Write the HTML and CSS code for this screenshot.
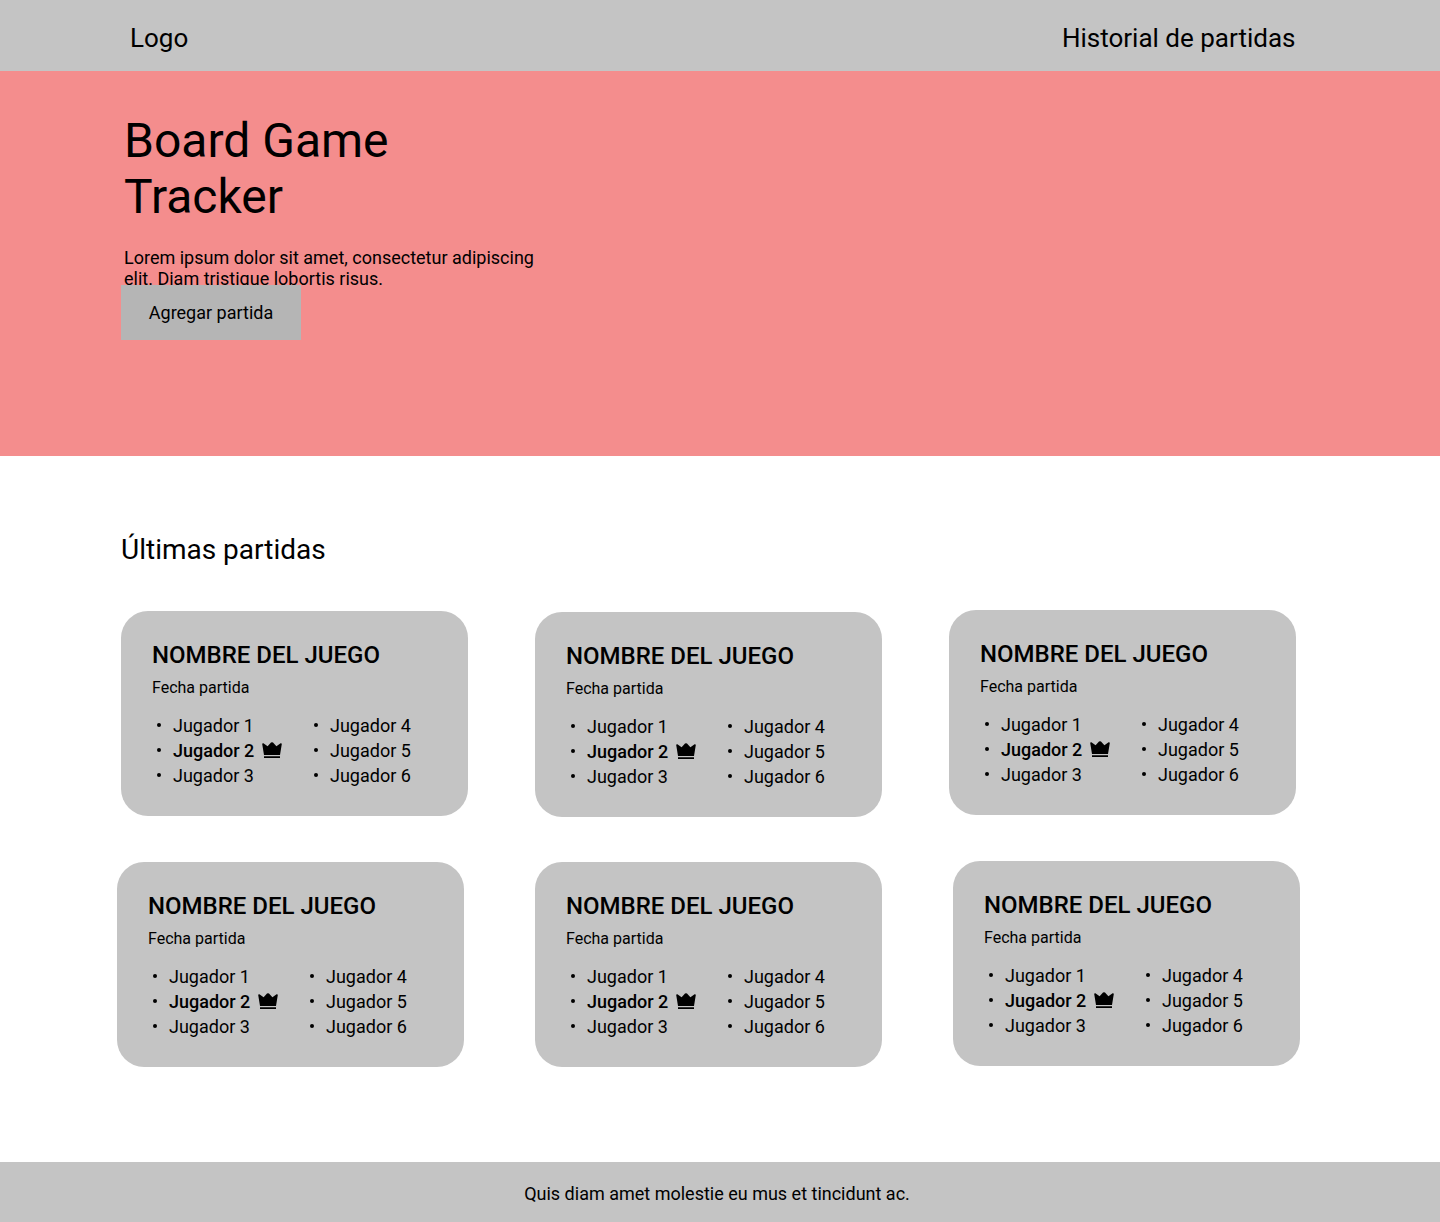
FILE: index.html
```html
<!DOCTYPE html>
<html lang="es">
<head>
<meta charset="utf-8">
<title>Board Game Tracker</title>
<link rel="stylesheet" href="styles.css">
</head>
<body>
<svg class="symbols" aria-hidden="true">
  <symbol id="crown" viewBox="0 0 20 16">
    <path d="M.2 1.9Q.4 1 1.4 1.3L5.6 4.2 9 .6Q10-.2 11 .6L14.4 4.2 18.6 1.3Q19.6 1 19.8 1.9L18 12.9H2ZM2 14.2H18V16H2Z"/>
  </symbol>
</svg>
<header class="header">
  <span>Logo</span>
  <span>Historial de partidas</span>
</header>
<section class="hero">
  <h1 class="hero-title">Board Game<br>Tracker</h1>
  <p class="hero-text">Lorem ipsum dolor sit amet, consectetur adipiscing<br>elit. Diam tristique lobortis risus.</p>
  <button class="hero-button" type="button">Agregar partida</button>
</section>
<main class="games">
  <h2 class="games-title">Últimas partidas</h2>
  <div class="row row-first">
    <article class="card drop-1">
      <h3 class="card-title">NOMBRE DEL JUEGO</h3>
      <p class="card-date">Fecha partida</p>
      <div class="players">
        <ul class="list"><li>Jugador 1</li><li class="winner">Jugador 2<svg class="crown"><use href="#crown"/></svg></li><li>Jugador 3</li></ul>
        <ul class="list"><li>Jugador 4</li><li>Jugador 5</li><li>Jugador 6</li></ul>
      </div>
    </article>
    <article class="card drop-2">
      <h3 class="card-title">NOMBRE DEL JUEGO</h3>
      <p class="card-date">Fecha partida</p>
      <div class="players">
        <ul class="list"><li>Jugador 1</li><li class="winner">Jugador 2<svg class="crown"><use href="#crown"/></svg></li><li>Jugador 3</li></ul>
        <ul class="list"><li>Jugador 4</li><li>Jugador 5</li><li>Jugador 6</li></ul>
      </div>
    </article>
    <article class="card">
      <h3 class="card-title">NOMBRE DEL JUEGO</h3>
      <p class="card-date">Fecha partida</p>
      <div class="players">
        <ul class="list"><li>Jugador 1</li><li class="winner">Jugador 2<svg class="crown"><use href="#crown"/></svg></li><li>Jugador 3</li></ul>
        <ul class="list"><li>Jugador 4</li><li>Jugador 5</li><li>Jugador 6</li></ul>
      </div>
    </article>
  </div>
  <div class="row row-second">
    <article class="card drop-1">
      <h3 class="card-title">NOMBRE DEL JUEGO</h3>
      <p class="card-date">Fecha partida</p>
      <div class="players">
        <ul class="list"><li>Jugador 1</li><li class="winner">Jugador 2<svg class="crown"><use href="#crown"/></svg></li><li>Jugador 3</li></ul>
        <ul class="list"><li>Jugador 4</li><li>Jugador 5</li><li>Jugador 6</li></ul>
      </div>
    </article>
    <article class="card drop-1">
      <h3 class="card-title">NOMBRE DEL JUEGO</h3>
      <p class="card-date">Fecha partida</p>
      <div class="players">
        <ul class="list"><li>Jugador 1</li><li class="winner">Jugador 2<svg class="crown"><use href="#crown"/></svg></li><li>Jugador 3</li></ul>
        <ul class="list"><li>Jugador 4</li><li>Jugador 5</li><li>Jugador 6</li></ul>
      </div>
    </article>
    <article class="card">
      <h3 class="card-title">NOMBRE DEL JUEGO</h3>
      <p class="card-date">Fecha partida</p>
      <div class="players">
        <ul class="list"><li>Jugador 1</li><li class="winner">Jugador 2<svg class="crown"><use href="#crown"/></svg></li><li>Jugador 3</li></ul>
        <ul class="list"><li>Jugador 4</li><li>Jugador 5</li><li>Jugador 6</li></ul>
      </div>
    </article>
  </div>
</main>
<footer class="footer">Quis diam amet molestie eu mus et tincidunt ac.</footer>
</body>
</html>
```
FILE: styles.css
```css
* { box-sizing: border-box; margin: 0; padding: 0; }

body {
  display: flex;
  flex-direction: column;
  height: 1222px;
  background: #fff;
  color: #000;
  font-family: Roboto, "Liberation Sans", sans-serif;
  font-size: 18px;
  line-height: 21px;
}

.symbols {
  position: absolute;
  width: 0;
  height: 0;
}

.header {
  display: flex;
  justify-content: space-between;
  height: 71px;
  padding: 23px 144.5px 0 130px;
  background: #c4c4c4;
  font-size: 26px;
  line-height: 30px;
}

.hero {
  height: 385px;
  padding: 42px 0 0 124px;
  background: #f48d8d;
}

.hero-title {
  font-size: 48px;
  font-weight: 400;
  line-height: 56px;
}

.hero-text { margin-top: 22px; }

/* The button overlaps the last line of the intro text. */
.hero-button {
  display: block;
  position: relative;
  width: 180px;
  height: 55px;
  margin: -4px 0 0 -3px;
  padding-bottom: 1px;
  border: 0;
  background: #b5b5b5;
  color: inherit;
  font: inherit;
}

.games {
  flex: 1;
  padding-top: 77px;
}

.games-title {
  padding-left: 121px;
  font-size: 28px;
  font-weight: 400;
  line-height: 33px;
}

.row {
  display: flex;
  align-items: flex-start;
}

.row-first {
  gap: 67px;
  height: 207px;
  margin-top: 44px;
  padding-left: 121px;
}

.row-second {
  gap: 71px;
  margin-top: 44px;
  padding-left: 117px;
}

.card {
  width: 347px;
  height: 205px;
  padding: 30px 31px 0;
  border-radius: 27px;
  background: #c4c4c4;
}

.drop-1 { margin-top: 1px; }
.drop-2 { margin-top: 2px; }

.card-title {
  font-size: 24px;
  font-weight: 500;
  line-height: 28px;
}

.card-date {
  margin-top: 9px;
  font-size: 16px;
  line-height: 19px;
}

.players {
  display: grid;
  grid-template-columns: 157px 1fr;
  margin-top: 16px;
}

.list { list-style: none; }

.list li {
  display: flex;
  align-items: center;
  height: 25px;
}

.list li::before {
  content: "";
  width: 4px;
  height: 4px;
  margin: 0 11.6px 1px 5.4px;
  border-radius: 50%;
  background: #000;
}

.winner { font-weight: 500; }

.crown {
  width: 20px;
  height: 16px;
  margin: 0 0 1px 8px;
}

.footer {
  height: 60px;
  padding: 21px 6px 0 0;
  background: #c4c4c4;
  text-align: center;
}
```
